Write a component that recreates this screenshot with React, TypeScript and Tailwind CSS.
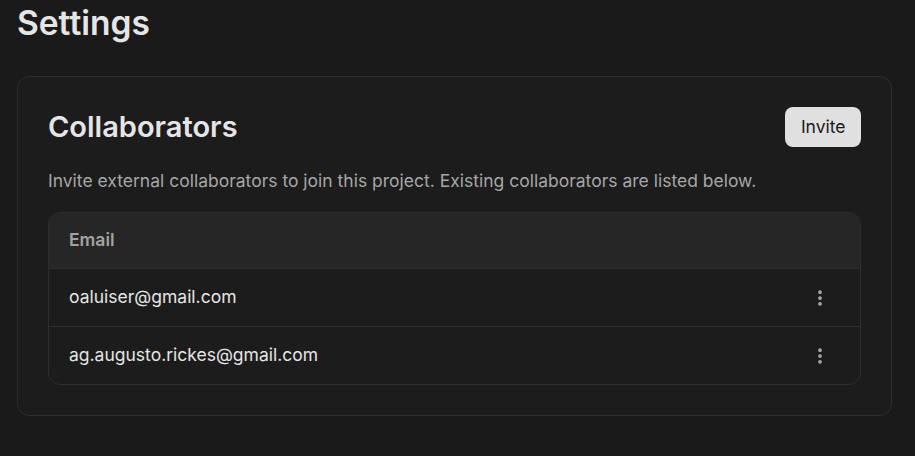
import React from 'react';
import { MoreVertical } from 'lucide-react';

const collaborators = ['oaluiser@gmail.com', 'ag.augusto.rickes@gmail.com'];

const App: React.FC = () => {
  return (
    <div className="min-h-screen bg-[#1a1a1a] pl-[17px] pr-[23px] pt-[3px] font-['Inter',sans-serif] text-[#e5e5e5]">
      <h1 className="text-[33.5px] font-semibold leading-[40px] text-[#e5e5e5]">Settings</h1>

      <div className="mt-[33px] rounded-xl border border-[#2e2e2e] bg-[#1c1c1c] p-[30px]">
        <div className="flex items-center justify-between">
          <h2 className="text-[29px] font-semibold leading-10 text-[#e5e5e5]">Collaborators</h2>
          <button className="h-10 rounded-lg bg-[#e0e0e0] px-[15.5px] text-[17.5px] text-[#1a1a1a]">Invite</button>
        </div>
        <p className="mt-[22px] text-[17.5px] leading-6 text-[#a6a6a6]">
          Invite external collaborators to join this project. Existing collaborators are listed below.
        </p>

        <div className="mt-[19px] overflow-hidden rounded-xl border border-[#2e2e2e]">
          <div className="flex h-[55px] items-center bg-[#262626] px-5 text-[17.5px] font-semibold text-[#a3a3a3]">
            Email
          </div>
          {collaborators.map((email) => (
            <div
              key={email}
              className="flex h-[58px] items-center justify-between border-t border-[#2e2e2e] px-5 text-[17.5px]"
            >
              <span>{email}</span>
              <MoreVertical size={20} strokeWidth={2.5} className="mr-[10px] text-[#aaaaaa]" />
            </div>
          ))}
        </div>
      </div>
    </div>
  );
};

export default App;
